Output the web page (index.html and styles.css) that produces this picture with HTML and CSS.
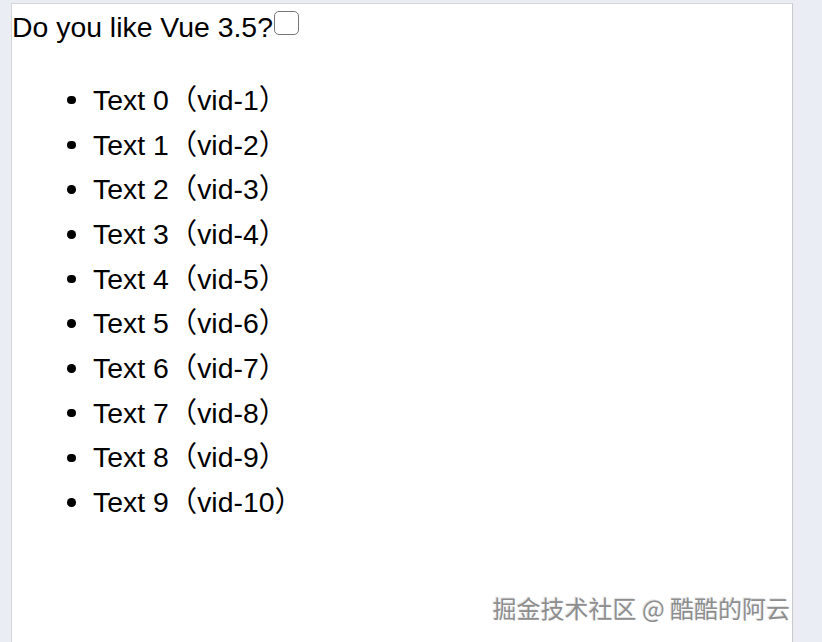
FILE: index.html
```html
<!DOCTYPE html>
<html lang="zh-CN">
<head>
<meta charset="utf-8">
<title>Vue 3.5</title>
<link rel="stylesheet" href="styles.css">
</head>
<body>
<div class="panel">
  <div class="question">Do you like Vue 3.5?<input class="check" type="checkbox"></div>
  <ul class="list">
    <li>Text 0（vid-1）</li>
    <li>Text 1（vid-2）</li>
    <li>Text 2（vid-3）</li>
    <li>Text 3（vid-4）</li>
    <li>Text 4（vid-5）</li>
    <li>Text 5（vid-6）</li>
    <li>Text 6（vid-7）</li>
    <li>Text 7（vid-8）</li>
    <li>Text 8（vid-9）</li>
    <li>Text 9（vid-10）</li>
  </ul>
</div>
<div class="watermark">掘金技术社区 @ 酷酷的阿云</div>
</body>
</html>
```
FILE: styles.css
```css
html, body {
  margin: 0;
  padding: 0;
}
body {
  background: #ebedf5;
  font-family: "Liberation Sans", "Noto Sans CJK SC", sans-serif;
  color: #000;
  overflow: hidden;
  height: 642px;
  position: relative;
}
.panel {
  box-sizing: border-box;
  margin: 3px 0 0 11px;
  width: 782px;
  height: 700px;
  background: #fff;
  border: 1px solid #d6d6d8;
  border-right-color: #c8c8ca;
  padding-top: 6.5px;
}
.question {
  font-size: 28.4px;
  line-height: 32px;
}
.check {
  appearance: none;
  -webkit-appearance: none;
  display: inline-block;
  box-sizing: border-box;
  width: 25px;
  height: 24px;
  margin: 0 0 0 1px;
  border: 1.5px solid #767676;
  border-radius: 5px;
  background: #fff;
  vertical-align: 1.5px;
}
.list {
  margin: 35.3px 0 0 0;
  padding-left: 81px;
  font-size: 28.4px;
  line-height: 44.7px;
  list-style: none;
}
.list li {
  display: flex;
  align-items: center;
}
.list li::before {
  content: "";
  flex: none;
  width: 8.5px;
  height: 8.5px;
  border-radius: 50%;
  background: #000;
  margin-left: -25.75px;
  margin-right: 17.25px;
}
.watermark {
  position: absolute;
  right: 32px;
  top: 593px;
  font-family: "Noto Sans CJK SC", sans-serif;
  font-size: 24px;
  line-height: 30px;
  color: #8e8e8e;
  text-shadow: 1px 1px 1px rgba(255,255,255,0.95), -1px -1px 1px rgba(0,0,0,0.12);
}
```
